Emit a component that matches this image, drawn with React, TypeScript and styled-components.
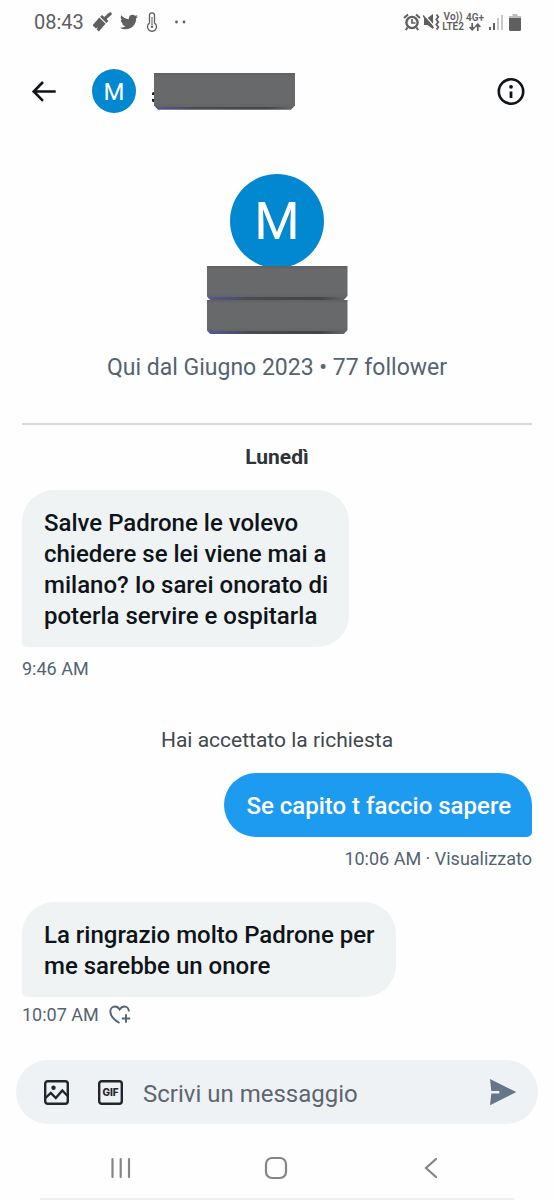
import React from "react";
import styled, { createGlobalStyle } from "styled-components";
import { FaTwitter } from "react-icons/fa";

const GlobalStyle = createGlobalStyle`
  *, *::before, *::after { box-sizing: border-box; }
  body {
    margin: 0;
    background: #fefefe;
    color: #0f1419;
    font-family: Roboto, "Liberation Sans", sans-serif;
  }
  button { border: 0; padding: 0; background: none; color: inherit; font: inherit; cursor: pointer; }
  h1, h2, p { margin: 0; font: inherit; }
  svg { display: block; flex: none; }
`;

const Screen = styled.div`
  display: flex;
  flex-direction: column;
  min-height: 100vh;
`;

const StatusBar = styled.div`
  display: flex;
  justify-content: space-between;
  align-items: center;
  height: 44px;
  padding: 0 33px 0 34px;
  color: #5f5f5f;
`;

const StatusGroup = styled.div<{ $gap: number }>`
  display: flex;
  align-items: center;
  gap: ${(p) => p.$gap}px;
`;

const Clock = styled.span`
  font-size: 20px;
  line-height: 24px;
`;

const NetworkLabel = styled.span`
  display: flex;
  flex-direction: column;
  align-items: center;
  font-size: 10px;
  line-height: 10px;
  font-weight: 600;
`;

const Header = styled.header`
  display: flex;
  align-items: center;
  height: 94px;
  padding: 0 29px 0 30px;
`;

const IconButton = styled.button`
  display: flex;
  align-items: center;
  justify-content: center;
  width: 28px;
  height: 28px;
  flex: none;
`;

const Avatar = styled.div<{ $large?: boolean }>`
  display: flex;
  align-items: center;
  justify-content: center;
  width: ${(p) => (p.$large ? 94 : 44)}px;
  height: ${(p) => (p.$large ? 94 : 44)}px;
  padding-top: 2px;
  border-radius: 50%;
  background: #0288d1;
  color: #fff;
  font-size: ${(p) => (p.$large ? 52 : 24)}px;
  line-height: 1;
`;

const HeaderIdentity = styled.div`
  display: flex;
  align-items: center;
  flex: 1;
  gap: 18px;
  padding-left: 34px;
`;

const HiddenName = styled.div<{ $peek?: boolean }>`
  position: relative;
  width: 141px;
  display: flex;
  flex-direction: column;

  &::before {
    content: "";
    display: ${(p) => (p.$peek ? "block" : "none")};
    position: absolute;
    left: -2px;
    top: 19px;
    width: 3px;
    height: 10px;
    border: solid #17191c;
    border-width: 3px 0;
    border-radius: 2px;
  }
`;

const Strip = styled.span<{ $tall?: boolean }>`
  height: ${(p) => (p.$tall ? 37 : 34)}px;
  background:
    linear-gradient(90deg, #5257a0, #4a4a50 30%, #454547 80%, #6a6a6a) bottom / 100% 3px no-repeat,
    linear-gradient(#5f6062, #68696b 10%, #68696b 80%, #5f6062);
  clip-path: polygon(0 0, 100% 0, 100% calc(100% - 4px), calc(100% - 4px) 100%, 4px 100%, 0 calc(100% - 4px));
`;

const Profile = styled.section`
  display: flex;
  flex-direction: column;
  align-items: center;
  margin: 0 22px;
  padding: 36px 0 41px;
  border-bottom: 2px solid #d6d9db;

  ${HiddenName} { margin-top: -2px; }
`;

const ProfileMeta = styled.p`
  margin-top: 20px;
  color: #536471;
  font-size: 23px;
  line-height: 28px;
`;

const Conversation = styled.main`
  display: flex;
  flex-direction: column;
  flex: 1;
  padding: 0 22px;
`;

const DayLabel = styled.h2`
  margin: 18px 0 19px;
  color: #2f3438;
  font-size: 21px;
  line-height: 28px;
  font-weight: 700;
  text-align: center;
`;

const Notice = styled.p`
  margin: 43px 0 19px;
  color: #40474d;
  font-size: 21px;
  line-height: 28px;
  text-align: center;
`;

const Message = styled.article<{ $own?: boolean }>`
  display: flex;
  flex-direction: column;
  align-items: ${(p) => (p.$own ? "flex-end" : "flex-start")};
`;

const Bubble = styled.p<{ $own?: boolean }>`
  padding: 18px 21px 15px 22px;
  border-radius: ${(p) => (p.$own ? "32px 32px 5px 32px" : "32px 32px 32px 5px")};
  background: ${(p) => (p.$own ? "#1d9bf0" : "#eff3f4")};
  color: ${(p) => (p.$own ? "#fff" : "#0f1419")};
  font-size: 24px;
  line-height: 31px;
  font-weight: 500;
`;

const MessageMeta = styled.div<{ $tight?: boolean }>`
  display: flex;
  align-items: center;
  gap: 10px;
  margin-top: ${(p) => (p.$tight ? 4 : 8)}px;
  color: #536471;
  font-size: 18px;
  line-height: 28px;
`;

const ReplyGap = styled.div`
  height: 29px;
`;

const Composer = styled.form`
  display: flex;
  align-items: center;
  height: 64px;
  margin: 0 16px;
  padding: 0 21px 0 26px;
  border-radius: 32px;
  background: #eef2f5;
  color: #21262b;
`;

const Tools = styled.div`
  display: flex;
  gap: 26px;
`;

const MessageInput = styled.input`
  flex: 1;
  min-width: 0;
  margin: 0 18px 0 19px;
  padding: 4px 0 0;
  border: 0;
  outline: 0;
  background: transparent;
  color: #0f1419;
  font: 24px/32px Roboto, "Liberation Sans", sans-serif;
  &::placeholder { color: #5d666e; opacity: 1; }
`;

const SystemNav = styled.nav`
  display: grid;
  grid-template-columns: repeat(3, 28px);
  justify-content: center;
  align-items: center;
  column-gap: 127px;
  height: 76px;
  padding: 14px 2px 0 0;
  margin: 0 40px;
  border-bottom: 2px solid #f1f1f1;
  color: #858585;
`;

const BrushIcon = () => (
  <svg width="20" height="20" viewBox="0 0 20 20" fill="currentColor" aria-hidden="true">
    <path d="M19.300.8c.7.800.6 1.600 0 2.200L14.600 7l1.800 2-2 1.900-6.300-6.100 2-1.900 2.100 2L16.900.8c.8-.6 1.700-.7 2.400 0z" />
    <path d="M7.300 5.600 13.600 11.700 6.800 19.400 4.700 17.400l1.300-2.200-2.200 1.300L.6 13.300z" />
  </svg>
);

const ThermometerIcon = () => (
  <svg width="12" height="20" viewBox="0 0 12 20" fill="none" stroke="currentColor" strokeWidth="1.300" aria-hidden="true">
    <path d="M3.500 11V3.300a2.500 2.500 0 0 1 5 0V11a4.500 4.500 0 1 1-5 0z" />
    <path d="M6 5v8" strokeWidth="1" />
    <circle cx="6" cy="14.700" r="1.200" fill="currentColor" stroke="none" />
  </svg>
);

const DotsIcon = () => (
  <svg width="22" height="4" viewBox="0 0 22 4" fill="currentColor" aria-hidden="true">
    <circle cx="10.500" cy="2" r="1.400" />
    <circle cx="18" cy="2" r="1.400" />
  </svg>
);

const AlarmIcon = () => (
  <svg width="18" height="18" viewBox="0 0 18 18" aria-hidden="true">
    <circle cx="9" cy="9.500" r="6.800" fill="currentColor" />
    <path d="M1 5 5 1.400M17 5 13 1.400M4.500 14.500 2.800 17M13.500 14.500l1.700 2.500" stroke="currentColor" strokeWidth="2" />
    <circle cx="9" cy="9.500" r="4.400" fill="#fefefe" />
    <path d="M9 6v4h3.500" fill="none" stroke="currentColor" strokeWidth="1.700" />
  </svg>
);

const MuteVibrateIcon = () => (
  <svg width="17" height="18" viewBox="0 0 17 18" aria-hidden="true">
    <path d="M1 5h3.500L10 1v15l-5.500-4H1z" fill="currentColor" />
    <path d="M1 1.500 11 13" stroke="#fefefe" strokeWidth="1.200" />
    <path d="M0 2.500 10.500 15" stroke="currentColor" strokeWidth="1.500" />
    <path d="M13.500 1.500 15.300 4l-2 2.500 2 2.500-2 2.500 2 2.500-1.600 2.500" fill="none" stroke="currentColor" strokeWidth="1.800" />
  </svg>
);

const DataArrowsIcon = () => (
  <svg width="12" height="8" viewBox="0 0 12 8" fill="none" stroke="currentColor" strokeWidth="1.700" aria-hidden="true">
    <path d="M3.200 0v6.500M.6 4l2.600 2.700L5.800 4M8.800 8V1.500M6.200 4l2.600-2.700L11.400 4" />
  </svg>
);

const SignalIcon = () => (
  <svg width="15" height="16" viewBox="0 0 15 16" aria-hidden="true">
    <path d="M0 13h2v3H0zM4 9h2v7H4z" fill="#5f5f5f" />
    <path d="M8 4h2v12H8zM12 1h2v15h-2z" fill="#c9c9c9" />
  </svg>
);

const BatteryIcon = () => (
  <svg width="12" height="17" viewBox="0 0 12 17" aria-hidden="true">
    <path d="M3.500 0h5v2H12v4H0V2h3.500z" fill="#bdbdbd" />
    <path d="M0 4h12v11.500a1.500 1.500 0 0 1-1.500 1.500h-9A1.500 1.500 0 0 1 0 15.500z" fill="#5f5f5f" />
  </svg>
);

const BackArrowIcon = () => (
  <svg width="28" height="28" viewBox="0 0 28 28" fill="none" stroke="currentColor" strokeWidth="2.600" aria-hidden="true">
    <path d="M13 5 3.700 14.500l9.300 9.300M3.700 14.500h22" />
  </svg>
);

const InfoIcon = () => (
  <svg width="28" height="28" viewBox="0 0 28 28" aria-hidden="true">
    <circle cx="14" cy="14.500" r="12.200" fill="none" stroke="currentColor" strokeWidth="2.600" />
    <circle cx="14" cy="9.800" r="1.900" fill="currentColor" />
    <path d="M12.600 14.500h2.800v6.500h-2.800z" fill="currentColor" />
  </svg>
);

const HeartPlusIcon = () => (
  <svg width="22" height="20" viewBox="0 0 22 20" fill="none" stroke="currentColor" strokeWidth="1.900" aria-hidden="true">
    <path d="M10.500 18C5.500 15.100 1.300 11 1.300 6.600 1.300 3.400 3.500 1.500 6 1.500c2 0 3.500 1 4.700 3 1.200-2 2.700-3 4.700-3 2.500 0 4.500 1.900 4.500 5" />
    <path d="M17 9.300v8.400M12.800 13.500h8.400" />
  </svg>
);

const PictureIcon = () => (
  <svg width="28" height="28" viewBox="0 0 28 28" fill="none" stroke="currentColor" strokeWidth="2.400" aria-hidden="true">
    <rect x="3.200" y="3.200" width="22.600" height="22.600" rx="2.500" />
    <circle cx="11.500" cy="9.700" r="2.200" fill="currentColor" stroke="none" />
    <path d="m3.500 20 5.300-5 5 5 6.500-7.500 5.300 5.500" />
  </svg>
);

const GifIcon = () => (
  <svg width="28" height="28" viewBox="0 0 28 28" aria-hidden="true">
    <rect x="3.200" y="3.200" width="22.600" height="22.600" rx="2.500" fill="none" stroke="currentColor" strokeWidth="2.400" />
    <text x="14.500" y="18" textAnchor="middle" fontFamily="Inter, sans-serif" fontSize="10" fontWeight="800" fill="currentColor">GIF</text>
  </svg>
);

const SendIcon = () => (
  <svg width="28" height="28" viewBox="0 0 28 28" fill="#657786" aria-hidden="true">
    <path d="M1 1 27.300 14 1 27.300l1.300-11.800h8v-2.600h-8z" />
  </svg>
);

const RecentsIcon = () => (
  <svg width="28" height="28" viewBox="0 0 28 28" stroke="currentColor" strokeWidth="2.200" strokeLinecap="round" aria-hidden="true">
    <path d="M5.500 5v18M13.700 5v18M22 5v18" />
  </svg>
);

const HomeIcon = () => (
  <svg width="28" height="28" viewBox="0 0 28 28" fill="none" stroke="currentColor" strokeWidth="2.200" aria-hidden="true">
    <rect x="4" y="4" width="20" height="20" rx="6" />
  </svg>
);

const NavBackIcon = () => (
  <svg width="28" height="28" viewBox="0 0 28 28" fill="none" stroke="currentColor" strokeWidth="2.200" strokeLinecap="round" aria-hidden="true">
    <path d="M19 5 9 14l10 9" />
  </svg>
);

export default function App() {
  return (
    <Screen>
      <GlobalStyle />
      <StatusBar>
        <StatusGroup $gap={8}>
          <Clock>08:43</Clock>
          <BrushIcon />
          <FaTwitter size={18} />
          <ThermometerIcon />
          <DotsIcon />
        </StatusGroup>
        <StatusGroup $gap={5}>
          <StatusGroup $gap={2}>
            <AlarmIcon />
            <MuteVibrateIcon />
            <NetworkLabel>
              <span>Vo))</span>
              <span>LTE2</span>
            </NetworkLabel>
            <NetworkLabel>
              <span>4G+</span>
              <DataArrowsIcon />
            </NetworkLabel>
          </StatusGroup>
          <SignalIcon />
          <BatteryIcon />
        </StatusGroup>
      </StatusBar>

      <Header>
        <IconButton type="button" aria-label="Indietro"><BackArrowIcon /></IconButton>
        <HeaderIdentity>
          <Avatar>M</Avatar>
          <HiddenName $peek><Strip $tall /></HiddenName>
        </HeaderIdentity>
        <IconButton type="button" aria-label="Informazioni"><InfoIcon /></IconButton>
      </Header>

      <Profile>
        <Avatar $large>M</Avatar>
        <HiddenName>
          <Strip />
          <Strip />
        </HiddenName>
        <ProfileMeta>Qui dal Giugno 2023 • 77 follower</ProfileMeta>
      </Profile>

      <Conversation>
        <DayLabel>Lunedì</DayLabel>
        <Message>
          <Bubble>
            Salve Padrone le volevo<br />
            chiedere se lei viene mai a<br />
            milano? Io sarei onorato di<br />
            poterla servire e ospitarla
          </Bubble>
          <MessageMeta>9:46 AM</MessageMeta>
        </Message>
        <Notice>Hai accettato la richiesta</Notice>
        <Message $own>
          <Bubble $own>Se capito t faccio sapere</Bubble>
          <MessageMeta>10:06 AM · Visualizzato</MessageMeta>
        </Message>
        <ReplyGap />
        <Message>
          <Bubble>
            La ringrazio molto Padrone per<br />
            me sarebbe un onore
          </Bubble>
          <MessageMeta $tight>
            10:07 AM
            <button type="button" aria-label="Aggiungi reazione"><HeartPlusIcon /></button>
          </MessageMeta>
        </Message>
      </Conversation>

      <Composer onSubmit={(e) => e.preventDefault()}>
        <Tools>
          <IconButton type="button" aria-label="Foto"><PictureIcon /></IconButton>
          <IconButton type="button" aria-label="GIF"><GifIcon /></IconButton>
        </Tools>
        <MessageInput aria-label="Messaggio" placeholder="Scrivi un messaggio" />
        <IconButton type="submit" aria-label="Invia"><SendIcon /></IconButton>
      </Composer>

      <SystemNav aria-label="Sistema">
        <IconButton type="button" aria-label="Recenti"><RecentsIcon /></IconButton>
        <IconButton type="button" aria-label="Home"><HomeIcon /></IconButton>
        <IconButton type="button" aria-label="Torna indietro"><NavBackIcon /></IconButton>
      </SystemNav>
    </Screen>
  );
}
